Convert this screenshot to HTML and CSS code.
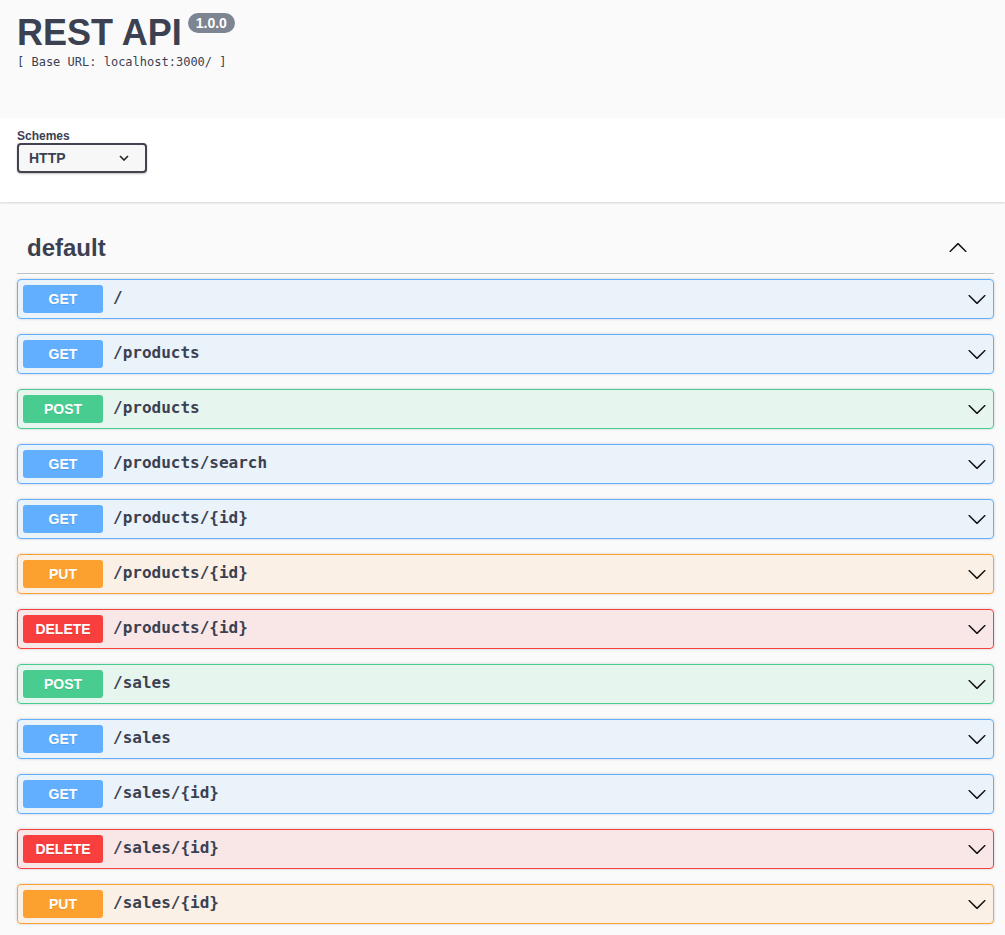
FILE: index.html
```html
<!DOCTYPE html>
<html lang="en">
<head>
<meta charset="utf-8">
<title>REST API</title>
<link rel="stylesheet" href="styles.css">
</head>
<body>
<div class="info">
  <div class="title-row">
    <h2 class="title">REST API</h2>
    <span class="version">1.0.0</span>
  </div>
  <pre class="base-url">[ Base URL: localhost:3000/ ]</pre>
</div>
<div class="scheme-container">
  <div class="schemes">
    <span class="schemes-title">Schemes</span>
    <div class="select">
      <span>HTTP</span>
      <svg class="select-arrow" width="10" height="6" viewBox="0 0 10 6"><path d="M1 1l4 4 4-4" fill="none" stroke="#222" stroke-width="1.6"/></svg>
    </div>
  </div>
</div>
<div class="wrapper">
  <h3 class="opblock-tag">
    <span class="tag-name">default</span>
    <svg class="tag-arrow" width="20" height="20" viewBox="0 0 20 20"><path d="M17.418 13.891c.272.268.709.268.979 0s.271-.701 0-.969l-7.908-7.83c-.27-.268-.707-.268-.979 0l-7.908 7.83c-.27.268-.27.701 0 .969.271.268.709.268.979 0L10 6.75l7.418 7.141z" fill="#111"/></svg>
  </h3>
  <div class="opblock get"><span class="method">GET</span><span class="path">/</span><svg class="arrow" width="20" height="20" viewBox="0 0 20 20"><path d="M17.418 6.109c.272-.268.709-.268.979 0s.271.701 0 .969l-7.908 7.83c-.27.268-.707.268-.979 0l-7.908-7.83c-.27-.268-.27-.701 0-.969.271-.268.709-.268.979 0L10 13.25l7.418-7.141z"/></svg></div>
  <div class="opblock get"><span class="method">GET</span><span class="path">/products</span><svg class="arrow" width="20" height="20" viewBox="0 0 20 20"><path d="M17.418 6.109c.272-.268.709-.268.979 0s.271.701 0 .969l-7.908 7.83c-.27.268-.707.268-.979 0l-7.908-7.83c-.27-.268-.27-.701 0-.969.271-.268.709-.268.979 0L10 13.25l7.418-7.141z"/></svg></div>
  <div class="opblock post"><span class="method">POST</span><span class="path">/products</span><svg class="arrow" width="20" height="20" viewBox="0 0 20 20"><path d="M17.418 6.109c.272-.268.709-.268.979 0s.271.701 0 .969l-7.908 7.83c-.27.268-.707.268-.979 0l-7.908-7.83c-.27-.268-.27-.701 0-.969.271-.268.709-.268.979 0L10 13.25l7.418-7.141z"/></svg></div>
  <div class="opblock get"><span class="method">GET</span><span class="path">/products/search</span><svg class="arrow" width="20" height="20" viewBox="0 0 20 20"><path d="M17.418 6.109c.272-.268.709-.268.979 0s.271.701 0 .969l-7.908 7.83c-.27.268-.707.268-.979 0l-7.908-7.83c-.27-.268-.27-.701 0-.969.271-.268.709-.268.979 0L10 13.25l7.418-7.141z"/></svg></div>
  <div class="opblock get"><span class="method">GET</span><span class="path">/products/{id}</span><svg class="arrow" width="20" height="20" viewBox="0 0 20 20"><path d="M17.418 6.109c.272-.268.709-.268.979 0s.271.701 0 .969l-7.908 7.83c-.27.268-.707.268-.979 0l-7.908-7.83c-.27-.268-.27-.701 0-.969.271-.268.709-.268.979 0L10 13.25l7.418-7.141z"/></svg></div>
  <div class="opblock put"><span class="method">PUT</span><span class="path">/products/{id}</span><svg class="arrow" width="20" height="20" viewBox="0 0 20 20"><path d="M17.418 6.109c.272-.268.709-.268.979 0s.271.701 0 .969l-7.908 7.83c-.27.268-.707.268-.979 0l-7.908-7.83c-.27-.268-.27-.701 0-.969.271-.268.709-.268.979 0L10 13.25l7.418-7.141z"/></svg></div>
  <div class="opblock delete"><span class="method">DELETE</span><span class="path">/products/{id}</span><svg class="arrow" width="20" height="20" viewBox="0 0 20 20"><path d="M17.418 6.109c.272-.268.709-.268.979 0s.271.701 0 .969l-7.908 7.83c-.27.268-.707.268-.979 0l-7.908-7.83c-.27-.268-.27-.701 0-.969.271-.268.709-.268.979 0L10 13.25l7.418-7.141z"/></svg></div>
  <div class="opblock post"><span class="method">POST</span><span class="path">/sales</span><svg class="arrow" width="20" height="20" viewBox="0 0 20 20"><path d="M17.418 6.109c.272-.268.709-.268.979 0s.271.701 0 .969l-7.908 7.83c-.27.268-.707.268-.979 0l-7.908-7.83c-.27-.268-.27-.701 0-.969.271-.268.709-.268.979 0L10 13.25l7.418-7.141z"/></svg></div>
  <div class="opblock get"><span class="method">GET</span><span class="path">/sales</span><svg class="arrow" width="20" height="20" viewBox="0 0 20 20"><path d="M17.418 6.109c.272-.268.709-.268.979 0s.271.701 0 .969l-7.908 7.83c-.27.268-.707.268-.979 0l-7.908-7.83c-.27-.268-.27-.701 0-.969.271-.268.709-.268.979 0L10 13.25l7.418-7.141z"/></svg></div>
  <div class="opblock get"><span class="method">GET</span><span class="path">/sales/{id}</span><svg class="arrow" width="20" height="20" viewBox="0 0 20 20"><path d="M17.418 6.109c.272-.268.709-.268.979 0s.271.701 0 .969l-7.908 7.83c-.27.268-.707.268-.979 0l-7.908-7.83c-.27-.268-.27-.701 0-.969.271-.268.709-.268.979 0L10 13.25l7.418-7.141z"/></svg></div>
  <div class="opblock delete"><span class="method">DELETE</span><span class="path">/sales/{id}</span><svg class="arrow" width="20" height="20" viewBox="0 0 20 20"><path d="M17.418 6.109c.272-.268.709-.268.979 0s.271.701 0 .969l-7.908 7.83c-.27.268-.707.268-.979 0l-7.908-7.83c-.27-.268-.27-.701 0-.969.271-.268.709-.268.979 0L10 13.25l7.418-7.141z"/></svg></div>
  <div class="opblock put"><span class="method">PUT</span><span class="path">/sales/{id}</span><svg class="arrow" width="20" height="20" viewBox="0 0 20 20"><path d="M17.418 6.109c.272-.268.709-.268.979 0s.271.701 0 .969l-7.908 7.83c-.27.268-.707.268-.979 0l-7.908-7.83c-.27-.268-.27-.701 0-.969.271-.268.709-.268.979 0L10 13.25l7.418-7.141z"/></svg></div>
</div>
</body>
</html>
```

FILE: styles.css
```css
html, body {
  margin: 0;
  padding: 0;
  background: #fafafa;
  font-family: "Liberation Sans", Arial, sans-serif;
  color: #3b4151;
}

.info {
  height: 118px;
  box-sizing: border-box;
  padding: 12px 17px 0 17px;
  background: #fafafa;
}

.title-row {
  display: flex;
  align-items: flex-start;
}

.title {
  margin: 0;
  font-size: 36px;
  font-weight: 700;
  line-height: normal;
  color: #3b4151;
}

.version {
  margin: 1px 0 0 6px;
  padding: 2px 8px;
  font-size: 14px;
  line-height: 16px;
  font-weight: 700;
  color: #fff;
  background: #7d8492;
  border-radius: 57px;
}

.base-url {
  margin: 1px 0 0 0;
  font-family: "DejaVu Sans Mono", monospace;
  font-size: 12px;
  line-height: 14px;
  color: #3b4151;
}

.scheme-container {
  background: #fff;
  height: 84px;
  box-sizing: border-box;
  padding: 11px 17px 0 17px;
  box-shadow: 0 1px 2px 0 rgba(0, 0, 0, 0.15);
  margin-bottom: 20px;
}

.schemes {
  display: flex;
  flex-direction: column;
  align-items: flex-start;
}

.schemes-title {
  font-size: 12px;
  font-weight: 700;
  line-height: 14px;
  color: #3b4151;
}

.select {
  width: 130px;
  height: 30px;
  box-sizing: border-box;
  border: 2px solid #41444e;
  border-radius: 4px;
  background: #f7f7f7;
  box-shadow: 0 1px 2px 0 rgba(0, 0, 0, 0.25);
  display: flex;
  align-items: center;
  justify-content: space-between;
  padding: 0 16px 0 10px;
  font-size: 14px;
  font-weight: 700;
  color: #3b4151;
}

.select-arrow {
  display: block;
}

.wrapper {
  padding: 0 11px 20px 17px;
}

.opblock-tag {
  margin: 0 0 5px 0;
  padding: 10px 26px 10px 10px;
  min-height: 31px;
  display: flex;
  align-items: center;
  justify-content: space-between;
  border-bottom: 1px solid rgba(59, 65, 81, 0.3);
  font-size: 24px;
  font-weight: 700;
  line-height: normal;
  color: #3b4151;
}

.tag-arrow {
  display: block;
}

.opblock {
  display: flex;
  align-items: center;
  height: 40px;
  box-sizing: border-box;
  padding: 5px 6px 5px 5px;
  margin-bottom: 15px;
  border: 1px solid;
  border-radius: 4px;
  box-shadow: 0 0 3px rgba(0, 0, 0, 0.19);
}

.method {
  min-width: 80px;
  height: 28px;
  box-sizing: border-box;
  display: flex;
  align-items: center;
  justify-content: center;
  border-radius: 3px;
  font-size: 14px;
  font-weight: 700;
  color: #fff;
  text-shadow: 0 1px 0 rgba(0, 0, 0, 0.1);
}

.path {
  flex: 1;
  padding: 0 0 2px 10px;
  font-family: "DejaVu Sans Mono", monospace;
  font-size: 16px;
  line-height: 18px;
  font-weight: 700;
  color: #3b4151;
}

.arrow {
  display: block;
  fill: #111;
}

.get { border-color: #61affe; background: rgba(97, 175, 254, 0.1); }
.get .method { background: #61affe; }
.post { border-color: #49cc90; background: rgba(73, 204, 144, 0.1); }
.post .method { background: #49cc90; }
.put { border-color: #fca130; background: rgba(252, 161, 48, 0.1); }
.put .method { background: #fca130; }
.delete { border-color: #f93e3e; background: rgba(249, 62, 62, 0.1); }
.delete .method { background: #f93e3e; }
```
